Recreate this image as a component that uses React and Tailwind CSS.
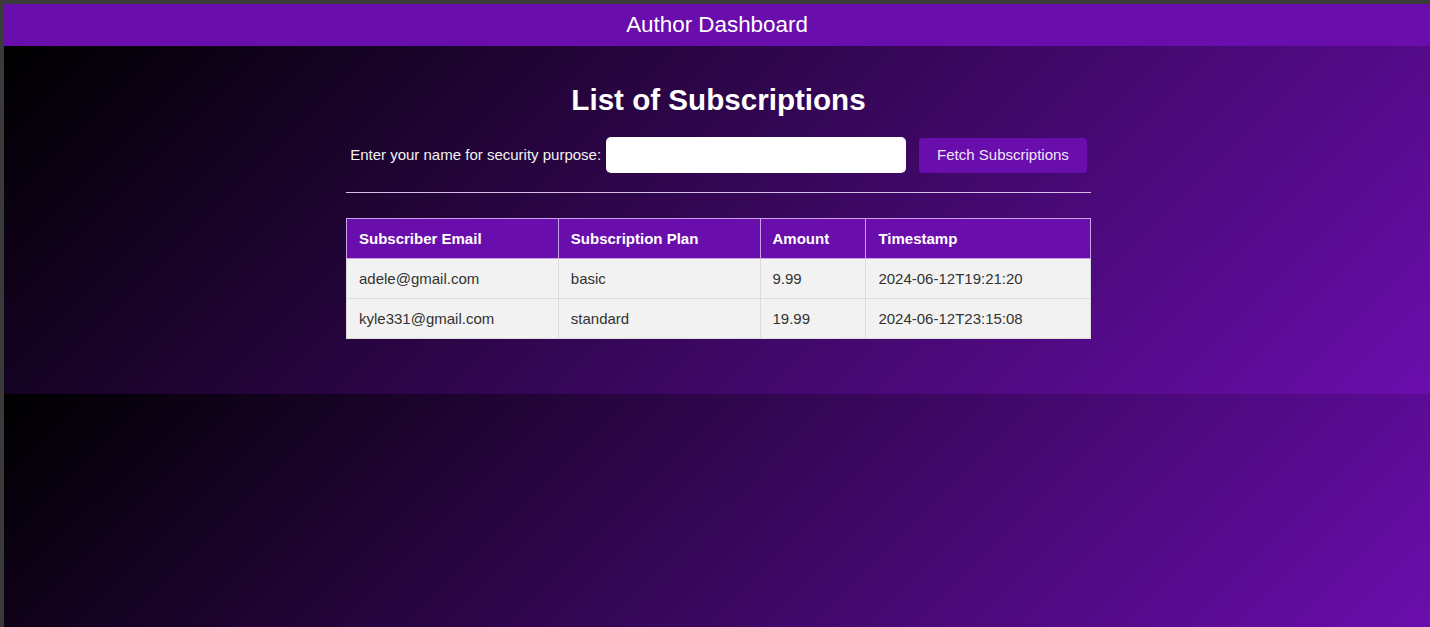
export default function App() {
  const rows = [
    ["adele@gmail.com", "basic", "9.99", "2024-06-12T19:21:20"],
    ["kyle331@gmail.com", "standard", "19.99", "2024-06-12T23:15:08"],
  ];
  const heads = ["Subscriber Email", "Subscription Plan", "Amount", "Timestamp"];
  const widths = ["w-[212px]", "w-[202px]", "w-[106px]", "w-[225px]"];
  return (
    <div
      className="h-[627px] bg-[#3a3a3a] pt-[4px] pl-[4px] overflow-hidden"
      style={{ fontFamily: '"Liberation Sans", Arial, sans-serif' }}
    >
      <div className="h-full flex flex-col">
        <header className="h-[42px] shrink-0 bg-[#6a0dad] flex items-center justify-center text-white text-[22.4px]">
          Author Dashboard
        </header>
        <main className="pt-[37px] pb-[55px] pl-[3px] flex justify-center bg-[linear-gradient(135deg,#000000,#6a0dad)]">
          <div className="w-[745px] flex flex-col">
            <h2 className="text-white text-[29.6px] font-bold leading-[34px] text-center">
              List of Subscriptions
            </h2>
            <div className="mt-[20px] h-[36px] flex items-center justify-center">
              <label className="text-[#f2f2f2] text-[15px]">Enter your name for security purpose:</label>
              <input className="ml-[5px] w-[300px] h-[36px] bg-white rounded-[5px] outline-none px-2" />
              <button className="ml-[13px] h-[35px] px-[18px] bg-[#6a0dad] text-[#f0e6fa] text-[15px] rounded-[4px]">
                Fetch Subscriptions
              </button>
            </div>
            <div className="mt-[19px] border-t border-[#d6bde8]" />
            <table className="mt-[25px] w-[745px] border-collapse border border-[#ddd] bg-[#f2f2f2] text-[15px] text-[#333]">
              <thead>
                <tr className="bg-[#6a0dad]">
                  {heads.map((h, i) => (
                    <th
                      key={h}
                      className={`${widths[i]} text-left font-bold text-white px-[12px] py-[11px] leading-[17px] border border-[#c9a3e6]`}
                    >
                      {h}
                    </th>
                  ))}
                </tr>
              </thead>
              <tbody>
                {rows.map((r) => (
                  <tr key={r[0]}>
                    {r.map((c, i) => (
                      <td key={i} className="px-[12px] py-[11px] leading-[17px] border border-[#dcdcdc]">
                        {c}
                      </td>
                    ))}
                  </tr>
                ))}
              </tbody>
            </table>
          </div>
        </main>
        <div className="flex-1 bg-[linear-gradient(135deg,#000000,#6a0dad)]" />
      </div>
    </div>
  );
}
